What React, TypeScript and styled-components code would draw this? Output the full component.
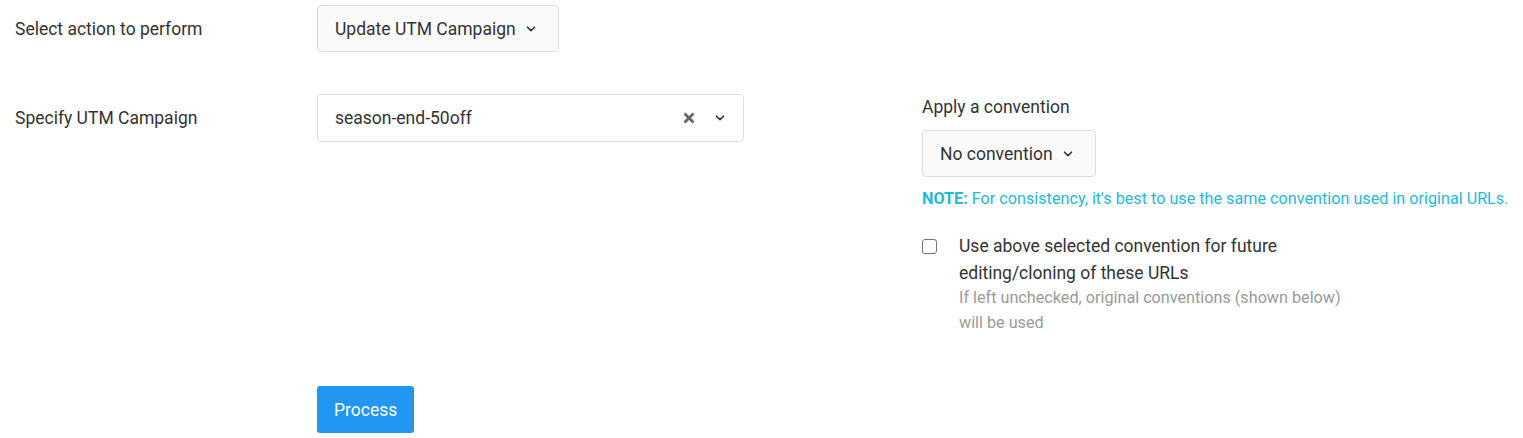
import * as React from 'react';
import styled, { createGlobalStyle } from 'styled-components';

const GlobalStyle = createGlobalStyle`
  body {
    margin: 0;
    background: #fff;
    font-family: Roboto, "Liberation Sans", sans-serif;
    color: #333;
  }
`;

const Page = styled.div`
  padding: 5px 15px 0 15px;
`;

const FormRow = styled.div<{ $gap?: number }>`
  display: grid;
  grid-template-columns: 302px 605px 1fr;
  align-items: start;
  margin-bottom: ${(p) => p.$gap ?? 0}px;
`;

const Label = styled.div`
  font-size: 17.5px;
  line-height: 24px;
  padding-top: 12px;
`;

const DropButton = styled.button`
  display: flex;
  align-items: center;
  gap: 10px;
  height: 47px;
  padding: 0 22px 0 17px;
  background: #fafafa;
  border: 1px solid #dedede;
  border-radius: 4px;
  font-family: inherit;
  font-size: 17.5px;
  color: #333;
  cursor: pointer;
`;

const SelectBox = styled.div`
  display: flex;
  align-items: center;
  width: 427px;
  height: 48px;
  box-sizing: border-box;
  padding: 0 18px 0 17px;
  background: #fff;
  border: 1px solid #dedede;
  border-radius: 4px;
  font-size: 17.5px;
  color: #333;
`;

const SelectValue = styled.span`
  flex: 1;
`;

const IconSlot = styled.span<{ $ml?: number }>`
  display: inline-flex;
  margin-left: ${(p) => p.$ml ?? 0}px;
`;

const Side = styled.div`
  display: flex;
  flex-direction: column;
  align-items: flex-start;
`;

const SideTitle = styled.div`
  font-size: 17.5px;
  line-height: 24px;
  padding-top: 1px;
  margin-bottom: 11px;
`;

const Note = styled.div`
  margin-top: 11px;
  font-size: 16.2px;
  line-height: 22px;
  color: #1fbad6;
  white-space: nowrap;
`;

const NoteTag = styled.strong`
  font-weight: 700;
`;

const CheckRow = styled.label`
  display: flex;
  align-items: flex-start;
  gap: 22px;
  margin-top: 23px;
`;

const Box = styled.span`
  display: inline-block;
  width: 13px;
  height: 13px;
  margin-top: 6px;
  border: 1.5px solid #767676;
  border-radius: 3px;
  flex-shrink: 0;
`;

const CheckText = styled.div`
  font-size: 17.5px;
  line-height: 27px;
  color: #333;
  width: 400px;
`;

const Hint = styled.div`
  margin-top: -2px;
  font-size: 16.2px;
  line-height: 25px;
  color: #9a9a9a;
  width: 390px;
`;

const PrimaryButton = styled.button`
  height: 47px;
  padding: 0 17px;
  background: #2196f3;
  color: #fff;
  border: none;
  border-radius: 3px;
  font-family: inherit;
  font-size: 17.5px;
  cursor: pointer;
`;

const Chevron = () => (
  <svg width="10" height="6" viewBox="0 0 10 6" fill="none">
    <path d="M1.5 1.2 L5 4.6 L8.5 1.2" stroke="#333" strokeWidth="1.6" strokeLinecap="round" strokeLinejoin="round" />
  </svg>
);

const Cross = () => (
  <svg width="12" height="12" viewBox="0 0 12 12" fill="none">
    <path d="M1.5 1.5 L10.5 10.5 M10.5 1.5 L1.5 10.5" stroke="#666" strokeWidth="2.8" strokeLinecap="butt" />
  </svg>
);

const App: React.FC = () => (
  <Page>
    <GlobalStyle />
    <FormRow $gap={42}>
      <Label>Select action to perform</Label>
      <div>
        <DropButton>
          Update UTM Campaign
          <Chevron />
        </DropButton>
      </div>
      <div />
    </FormRow>
    <FormRow $gap={51}>
      <Label>Specify UTM Campaign</Label>
      <div>
        <SelectBox>
          <SelectValue>season-end-50off</SelectValue>
          <IconSlot><Cross /></IconSlot>
          <IconSlot $ml={20}><Chevron /></IconSlot>
        </SelectBox>
      </div>
      <Side>
        <SideTitle>Apply a convention</SideTitle>
        <DropButton>
          No convention
          <Chevron />
        </DropButton>
        <Note>
          <NoteTag>NOTE:</NoteTag> For consistency, it's best to use the same convention used in original URLs.
        </Note>
        <CheckRow>
          <Box />
          <CheckText>
            Use above selected convention for future
            <br />
            editing/cloning of these URLs
            <Hint>
              If left unchecked, original conventions (shown below)
              <br />
              will be used
            </Hint>
          </CheckText>
        </CheckRow>
      </Side>
    </FormRow>
    <FormRow>
      <div />
      <div>
        <PrimaryButton>Process</PrimaryButton>
      </div>
      <div />
    </FormRow>
  </Page>
);

export default App;
